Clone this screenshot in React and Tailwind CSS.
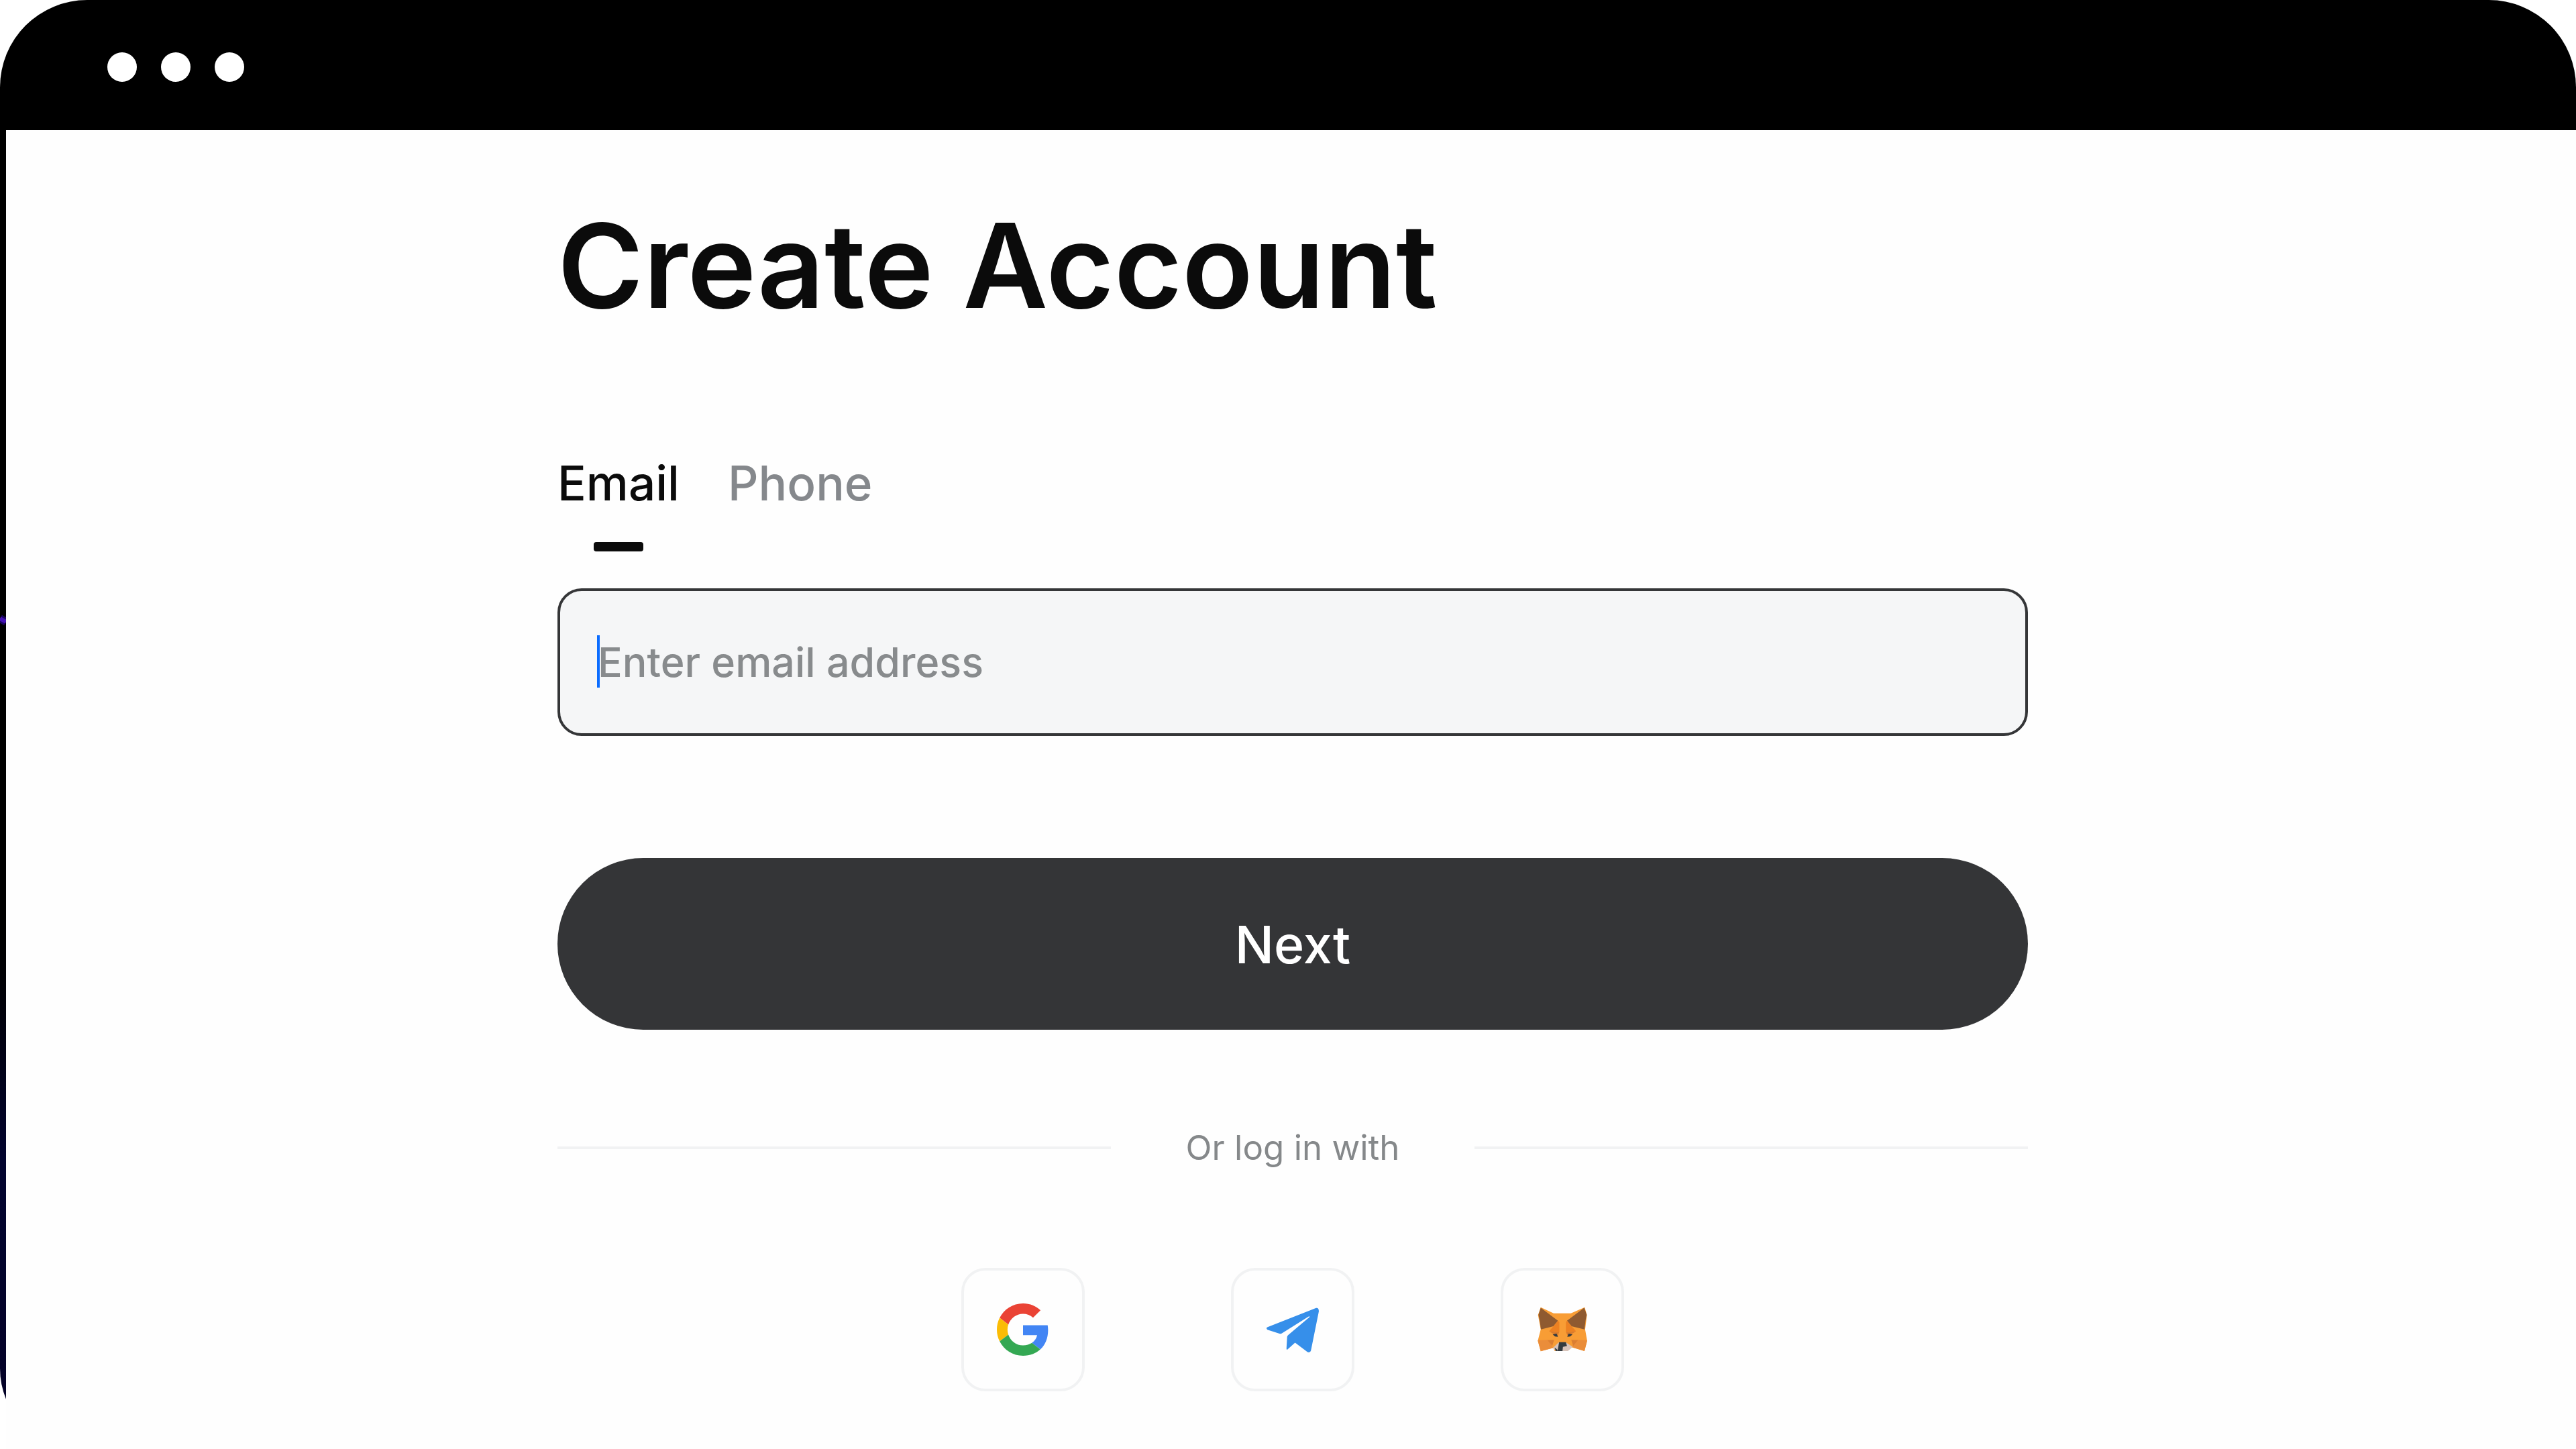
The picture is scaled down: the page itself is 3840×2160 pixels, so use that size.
import { useState } from "react";

const TABS = ["Email", "Phone"];

const GoogleIcon = () => (
  <svg viewBox="0 0 48 48" className="size-[78px]" aria-hidden="true">
    <path fill="#EA4335" d="M24 9.5c3.54 0 6.71 1.22 9.21 3.6l6.85-6.85C35.9 2.38 30.47 0 24 0 14.62 0 6.51 5.38 2.56 13.22l7.98 6.19C12.43 13.72 17.74 9.5 24 9.5z" />
    <path fill="#4285F4" d="M46.98 24.55c0-1.57-.15-3.09-.38-4.55H24v9.02h12.94c-.58 2.96-2.26 5.48-4.78 7.18l7.73 6c4.51-4.18 7.09-10.36 7.09-17.65z" />
    <path fill="#FBBC05" d="M10.53 28.59c-.48-1.45-.76-2.99-.76-4.59s.27-3.14.76-4.59l-7.98-6.19C.92 16.46 0 20.12 0 24c0 3.88.92 7.54 2.56 10.78l7.97-6.19z" />
    <path fill="#34A853" d="M24 48c6.48 0 11.93-2.13 15.89-5.81l-7.73-6c-2.15 1.45-4.92 2.3-8.16 2.3-6.26 0-11.57-4.22-13.47-9.91l-7.98 6.19C6.51 42.62 14.62 48 24 48z" />
  </svg>
);

const TelegramIcon = () => (
  <svg viewBox="262 248 237 237" className="size-20" fill="#368FEA" aria-hidden="true">
    <path d="M268 356L484 271Q496 269 496 286L461 459Q458 470 446 466L391 424L357 455Q353 456 353 450L356 398Q357 394 361 390L455 311Q456 307 451 309L333 383Q329 386 322 384L269 367Q261 361 268 356Z" />
  </svg>
);

const MetaMaskIcon = () => (
  <svg viewBox="267 248 237 237" className="size-20" aria-hidden="true">
    <path fill="#F89D35" d="M290 268L347 295H423L484 268L494 302L486 366L495 416L483 461L428 445L403 461H352L345 447L290 462L277 416L290 366L278 302Z" />
    <path fill="#EA8D3A" d="M277 414L322 412L345 447L290 462ZM495 414L450 412L426 443L483 461Z" />
    <path fill="#8F5A30" d="M290 270L366 327L346 352L291 366L285 325L280 301ZM482 270L406 327L426 352L483 366L488 325L493 301Z" />
    <path fill="#EC8122" d="M366 327L372 334V378L327 374L346 352ZM406 327L401 334V378L446 374L426 352Z" />
    <path fill="#D97B2D" d="M327 374L371 378L364 397ZM446 374L402 378L410 397Z" />
    <path fill="#DB7E32" d="M320 413L349 412L341 438ZM454 413L425 412L433 438Z" />
    <path fill="#343B3F" d="M343 388L360 384L366 398L353 397ZM430 388L413 384L407 398L420 397Z" />
    <path fill="#D8C4BA" d="M368 424L344 447L358 461H410L431 443L403 424Z" />
    <path fill="#343B3F" d="M371 422H401L406 439L388 443L386 461H364L368 440ZM351 446L363 455L364 461H356Z" />
  </svg>
);

const PROVIDERS = [
  { name: "Google", Icon: GoogleIcon },
  { name: "Telegram", Icon: TelegramIcon },
  { name: "MetaMask", Icon: MetaMaskIcon },
];

const TitleBar = () => (
  <header className="flex h-[194px] items-center gap-9 px-40 pt-1.5">
    <span className="size-11 rounded-full bg-white" />
    <span className="size-11 rounded-full bg-white" />
    <span className="size-11 rounded-full bg-white" />
  </header>
);

/* Purple streak of the backdrop that shows through the thin left edge */
const EdgeStreak = () => (
  <svg viewBox="0 0 9 24" className="absolute top-[914px] left-0 h-6 w-[9px]" aria-hidden="true">
    <path d="M0 8L9 13" stroke="#1b0560" strokeWidth="12" />
    <path d="M0 8L9 13" stroke="#4412b4" strokeWidth="6" />
  </svg>
);

const Divider = ({ children }) => (
  <div className="flex items-center gap-28">
    <span className="h-1 flex-1 bg-[#f1f2f3]" />
    <span className="text-[51px] leading-[64px] text-[#85888a]">{children}</span>
    <span className="h-1 flex-1 bg-[#f1f2f3]" />
  </div>
);

const App = () => {
  const [tab, setTab] = useState("Email");
  const [value, setValue] = useState("");

  return (
    <div className="bg-white">
      <div className="relative flex min-h-screen flex-col rounded-t-[130px] rounded-b-[120px] bg-linear-to-b from-black from-60% via-[#02042f] via-80% to-[#040226] font-[Inter,sans-serif]">
        <TitleBar />
        <EdgeStreak />

        <main className="ml-[9px] flex-1 bg-[#fefefe] pt-[90px] pl-[5px]">
          <form className="mx-auto max-w-[2192px]" onSubmit={(e) => e.preventDefault()}>
            <h1 className="text-[174px] leading-[224px] font-semibold text-[#0b0b0b]">Create Account</h1>

            <div role="tablist" className="mt-[168px] flex gap-[72px]">
              {TABS.map((name) => (
                <button
                  key={name}
                  type="button"
                  role="tab"
                  aria-selected={tab === name}
                  onClick={() => setTab(name)}
                  className={`flex flex-col items-center gap-11 text-[71px] leading-[88px] font-medium ${tab === name ? "text-[#0b0b0b]" : "text-[#85888c]"}`}
                >
                  {name}
                  {tab === name && <span className="h-[14px] w-[74px] rounded-sm bg-[#0b0b0b]" />}
                </button>
              ))}
            </div>

            <div className="relative mt-[55px]">
              <input
                type="text"
                aria-label="Enter email address"
                placeholder="Enter email address"
                value={value}
                onChange={(e) => setValue(e.target.value)}
                className="block h-[220px] w-full rounded-[36px] border-4 border-[#353638] bg-[#f5f6f7] px-14 text-[61px] font-medium text-[#0b0b0b] outline-none placeholder:text-[#888b8d]"
              />
              <span className="absolute top-[70px] left-[59px] h-[78px] w-1 bg-[#0a6cff]" />
            </div>

            <button type="submit" className="mt-[182px] block h-64 w-full rounded-full bg-[#343537] pt-1 text-[77px] font-medium text-white">
              Next
            </button>

            <div className="mt-[144px]">
              <Divider>Or log in with</Divider>
            </div>

            <div className="mt-[147px] flex justify-center gap-[218px]">
              {PROVIDERS.map(({ name, Icon }) => (
                <button
                  key={name}
                  type="button"
                  aria-label={`Log in with ${name}`}
                  className="flex size-[184px] items-center justify-center rounded-[36px] border-4 border-[#f1f2f3]"
                >
                  <Icon />
                </button>
              ))}
            </div>
          </form>
        </main>
      </div>
    </div>
  );
};

export default App;
